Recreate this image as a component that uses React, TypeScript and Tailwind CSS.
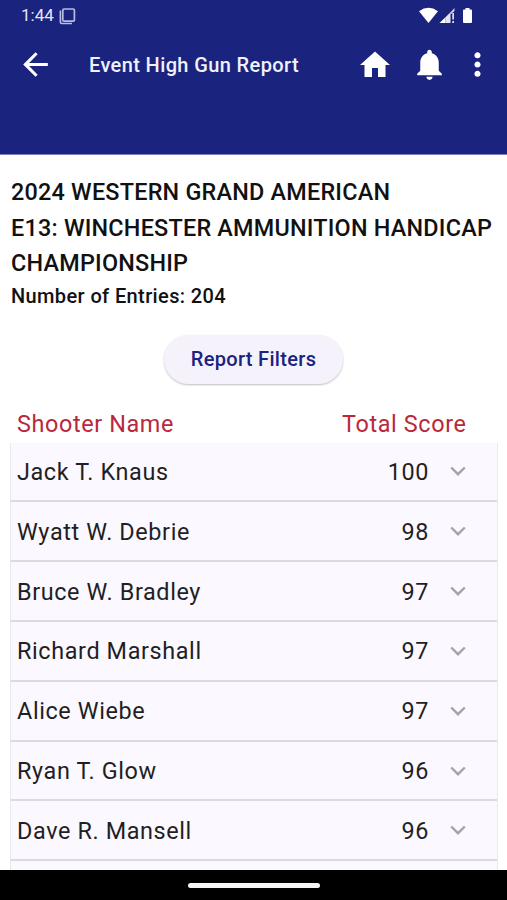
const shooters = [
  { name: "Jack T. Knaus", score: 100 },
  { name: "Wyatt W. Debrie", score: 98 },
  { name: "Bruce W. Bradley", score: 97 },
  { name: "Richard Marshall", score: 97 },
  { name: "Alice Wiebe", score: 97 },
  { name: "Ryan T. Glow", score: 96 },
  { name: "Dave R. Mansell", score: 96 },
];

function Icon({ d, className }: { d: string; className: string }) {
  return (
    <svg viewBox="0 0 24 24" fill="currentColor" className={className}>
      <path d={d} />
    </svg>
  );
}

function StatusBar() {
  return (
    <div className="flex h-8 items-center pl-[21px] pr-[33px] text-white">
      <span className="w-[33px] pb-px text-[17px] leading-[31px] whitespace-nowrap text-[#e4e6f6]">1:44</span>
      <svg viewBox="0 0 17 17" className="ml-[5px] h-[17px] w-[17px]" fill="none" stroke="#b9bce0">
        <rect x="3.800" y="1" width="11.600" height="12.200" rx="1.300" strokeWidth="1.700" />
        <path d="M1.400 2.500v11.500q0 1.500 1.500 1.500H13" strokeWidth="1.700" />
      </svg>
      <svg viewBox="0 0 55 18" className="ml-auto h-[18px] w-[55px]" fill="currentColor">
        <path d="M0 4.300Q9.500 -2.600 19 4.300L9.500 16Z" />
        <path d="M20.500 16 26.500 10.200V16Z" />
        <path d="M26.500 10.200 31.500 5.200V16H26.500Z" fillOpacity=".88" />
        <path d="M31.500 5.200 35.500 1v3l-4 3.500z" fillOpacity=".8" />
        <path d="M33.300 6h1.700v6.500h-1.700zM33.300 14h1.700v2h-1.700z" fillOpacity=".85" />
        <path d="M46.500 1h4v1.500h1.500q1 0 1 1V15q0 1-1 1h-7q-1 0-1-1V3.500q0-1 1-1h1.500z" />
      </svg>
    </div>
  );
}

function AppBar() {
  return (
    <div className="flex h-[65px] items-center pl-[17px] pr-[11px] text-white">
      <Icon className="h-[37px] w-[37px]" d="M20 11H7.830l5.590-5.590L12 4l-8 8 8 8 1.410-1.410L7.830 13H20v-2z" />
      <h1 className="ml-[35px] text-[20px] font-medium tracking-[0.38px] whitespace-nowrap text-[#f0f1fb]">Event High Gun Report</h1>
      <div className="ml-auto flex items-center">
        <Icon className="h-9 w-9" d="M10 20v-6h4v6h5v-8h3L12 3 2 12h3v8z" />
        <Icon
          className="ml-[18px] h-[37px] w-[37px]"
          d="M12 22c1.100 0 2-.9 2-2h-4c0 1.100.89 2 2 2zm6-6v-5c0-3.070-1.640-5.640-4.500-6.320V4c0-.83-.67-1.500-1.500-1.500s-1.500.67-1.500 1.500v.68C7.630 5.360 6 7.920 6 11v5l-2 2v1h16v-1l-2-2z"
        />
        <Icon
          className="ml-[11px] h-[37px] w-[37px]"
          d="M12 8c1.100 0 2-.9 2-2s-.9-2-2-2-2 .9-2 2 .9 2 2 2zm0 2c-1.100 0-2 .9-2 2s.9 2 2 2 2-.9 2-2-.9-2-2-2zm0 6c-1.100 0-2 .9-2 2s.9 2 2 2 2-.9 2-2-.9-2-2-2z"
        />
      </div>
    </div>
  );
}

export default function App() {
  return (
    <div className="flex h-[900px] w-[507px] flex-col overflow-hidden bg-white font-['Roboto',sans-serif]">
      <header className="h-[155px] shrink-0 border-b border-[#7d81bd] bg-[#1a237e]">
        <StatusBar />
        <AppBar />
      </header>
      <main className="flex min-h-0 flex-1 flex-col overflow-hidden pr-[9px] pl-[10px] pt-[20px]">
        <div className="shrink-0 pl-px font-medium whitespace-nowrap text-[#111]">
          <h2 className="text-[23.400px] leading-[35.500px] tracking-[0.22px]">
            2024 WESTERN GRAND AMERICAN
            <br />
            E13: WINCHESTER AMMUNITION HANDICAP
            <br />
            CHAMPIONSHIP
          </h2>
          <p className="text-[20px] leading-[29px] tracking-[0.38px]">Number of Entries: 204</p>
        </div>
        <button className="mt-[24px] ml-[154px] h-[49px] w-[179px] shrink-0 rounded-full bg-[#f6f2fb] text-[20px] font-medium tracking-[0.32px] whitespace-nowrap text-[#1a237e] shadow-[0_1px_2px_rgba(0,0,0,0.25)]">
          Report Filters
        </button>
        <div className="mt-[21px] flex h-[38px] shrink-0 items-center justify-between pt-[2px] pr-[31.500px] pl-[7px] text-[23.400px] tracking-[0.62px] whitespace-nowrap text-[#b9283c]">
          <span>Shooter Name</span>
          <span>Total Score</span>
        </div>
        <div className="shrink-0 border-x border-[#ebe8ef] bg-[#fbf8ff] text-[23.400px] tracking-[0.62px] text-[#1f1f24]">
          {shooters.map((s) => (
            <div key={s.name} className="flex h-[59.840px] items-center border-b-2 border-[#dcdae0] pt-[2px] pl-[6px] whitespace-nowrap">
              <span className="flex-1">{s.name}</span>
              <span>{s.score}</span>
              <svg viewBox="0 0 16 10" className="mr-[31px] mb-[2px] ml-[21px] h-[10px] w-4" fill="none" stroke="#a5a3aa" strokeWidth="2.400">
                <path d="M1.200 1.500 8 8.200l6.800-6.700" />
              </svg>
            </div>
          ))}
          <div className="h-8" />
        </div>
      </main>
      <footer className="flex h-[30px] shrink-0 items-center justify-center bg-black">
        <div className="h-[5px] w-[132px] rounded-full bg-[#f4f4f4]" />
      </footer>
    </div>
  );
}
